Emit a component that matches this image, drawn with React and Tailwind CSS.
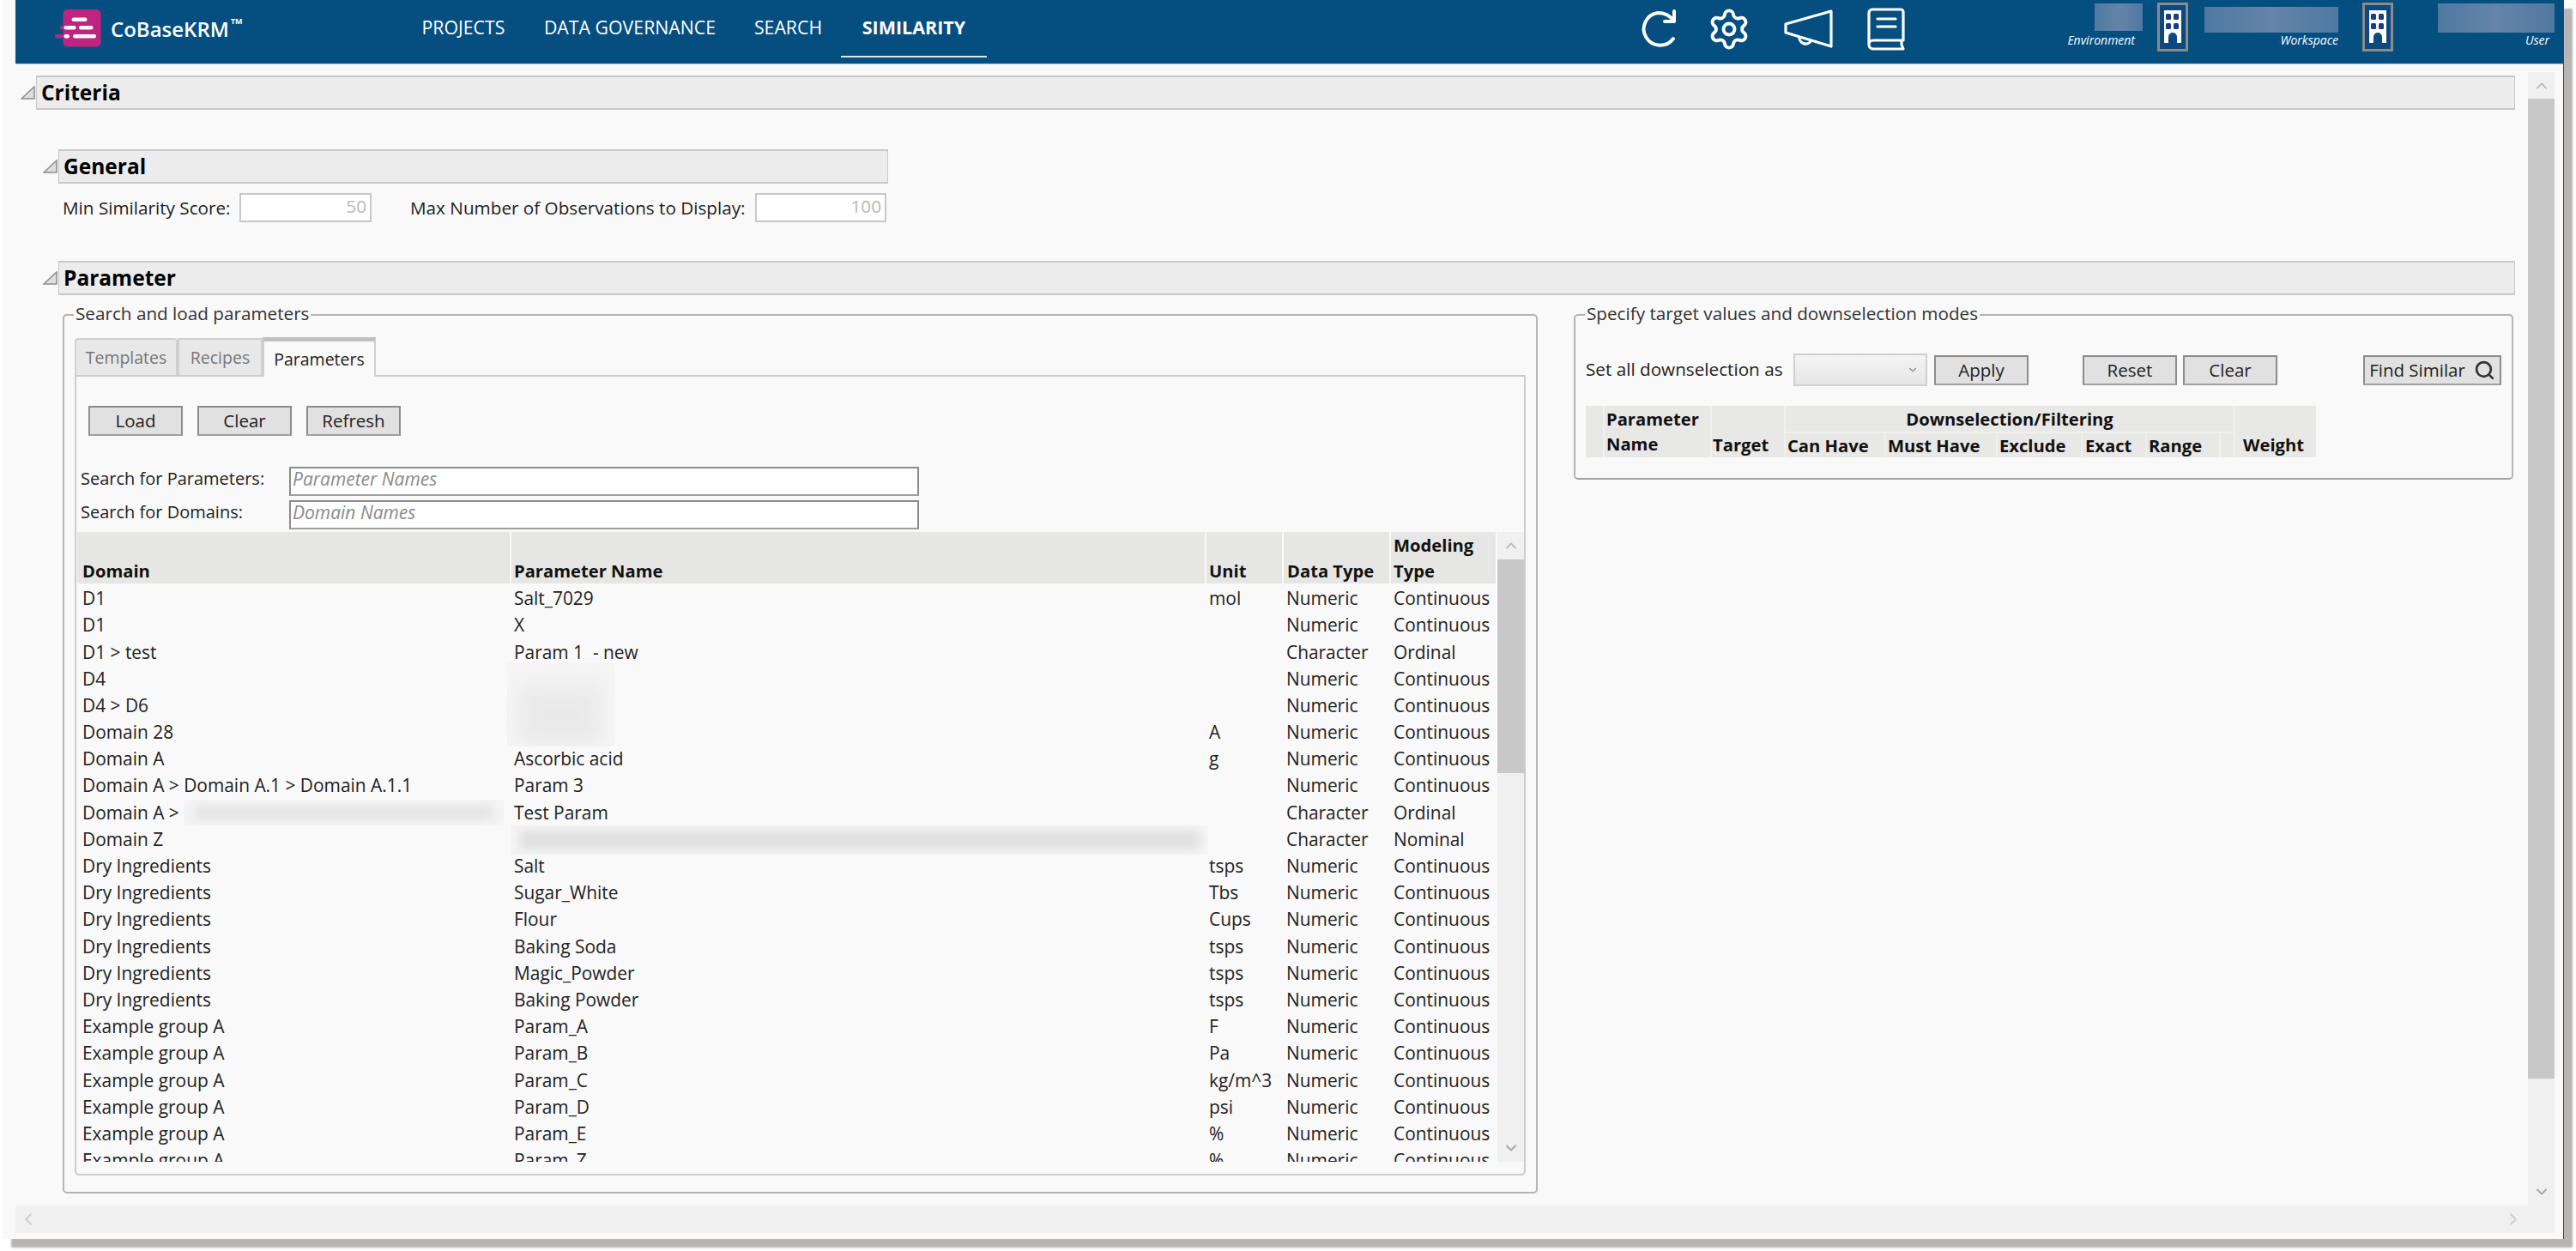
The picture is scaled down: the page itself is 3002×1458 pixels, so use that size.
import React from "react"
import { Settings, ChevronDown, ChevronUp, ChevronLeft, ChevronRight, Search } from "lucide-react"

const rows = [
  ["D1", "Salt_7029", "mol", "Numeric", "Continuous"],
  ["D1", "X", "", "Numeric", "Continuous"],
  ["D1 > test", "Param 1\u00a0 - new", "", "Character", "Ordinal"],
  ["D4", "", "", "Numeric", "Continuous"],
  ["D4 > D6", "", "", "Numeric", "Continuous"],
  ["Domain 28", "", "A", "Numeric", "Continuous"],
  ["Domain A", "Ascorbic acid", "g", "Numeric", "Continuous"],
  ["Domain A > Domain A.1 > Domain A.1.1", "Param 3", "", "Numeric", "Continuous"],
  ["Domain A >", "Test Param", "", "Character", "Ordinal"],
  ["Domain Z", "", "", "Character", "Nominal"],
  ["Dry Ingredients", "Salt", "tsps", "Numeric", "Continuous"],
  ["Dry Ingredients", "Sugar_White", "Tbs", "Numeric", "Continuous"],
  ["Dry Ingredients", "Flour", "Cups", "Numeric", "Continuous"],
  ["Dry Ingredients", "Baking Soda", "tsps", "Numeric", "Continuous"],
  ["Dry Ingredients", "Magic_Powder", "tsps", "Numeric", "Continuous"],
  ["Dry Ingredients", "Baking Powder", "tsps", "Numeric", "Continuous"],
  ["Example group A", "Param_A", "F", "Numeric", "Continuous"],
  ["Example group A", "Param_B", "Pa", "Numeric", "Continuous"],
  ["Example group A", "Param_C", "kg/m^3", "Numeric", "Continuous"],
  ["Example group A", "Param_D", "psi", "Numeric", "Continuous"],
  ["Example group A", "Param_E", "%", "Numeric", "Continuous"],
  ["Example group A", "Param_Z", "%", "Numeric", "Continuous"],
]

const Logo = () => (
  <svg width="54" height="44" viewBox="0 0 54 44" className="shrink-0">
    <rect x="9.5" y="0" width="44" height="43.5" rx="5" fill="#bf2580" />
    <rect x="19.5" y="9.5" width="18" height="4.5" rx="2.2" fill="#fff" />
    <rect x="5.5" y="19" width="6" height="4.5" rx="2" fill="#bf2580" />
    <rect x="10.5" y="19" width="14" height="4.5" rx="2.2" fill="#fff" />
    <rect x="28" y="19" width="16.5" height="4.5" rx="2.2" fill="#fff" />
    <rect x="0" y="29" width="10" height="4.5" rx="2" fill="#bf2580" />
    <rect x="10.5" y="29" width="6.5" height="4.5" rx="2.2" fill="#fff" />
    <rect x="21" y="29" width="27" height="4.5" rx="2.2" fill="#fff" />
  </svg>
)

const RefreshIcon = () => (
  <svg width="42" height="46" viewBox="0 0 42 46" fill="none" stroke="#fff" strokeWidth="4" strokeLinecap="round" strokeLinejoin="round">
    <path d="M38 13 C34 7 27 4 20 4 A19 19 0 1 0 38 34" />
    <path d="M39 2 V14 H28" />
  </svg>
)

const MegaphoneIcon = () => (
  <svg width="58" height="46" viewBox="0 0 58 46" fill="none" stroke="#fff" strokeWidth="3.2" strokeLinejoin="round">
    <path d="M55 2 L2 17 V27 L55 43 Z" />
    <path d="M18 31 a7.5 7.5 0 0 0 14 5" />
  </svg>
)

const BookIcon = () => (
  <svg width="44" height="50" viewBox="0 0 44 50" fill="none" stroke="#fff" strokeWidth="3.2" strokeLinecap="round" strokeLinejoin="round">
    <path d="M42 38 V5 a3 3 0 0 0 -3 -3 H6 a4 4 0 0 0 -4 4 V43 a5 5 0 0 0 5 5 H42 L40 43 V38 H7 a5 5 0 0 0 -5 5" />
    <path d="M12 13 H33 M12 22 H33" />
  </svg>
)

const BuildingIcon = () => (
  <svg width="36" height="57" viewBox="0 0 36 57" className="shrink-0">
    <rect x="1.5" y="1.5" width="33" height="54" fill="#0b4a80" stroke="#8f8a85" strokeWidth="3" />
    <rect x="8" y="9" width="20" height="38" fill="#fff" />
    <rect x="10" y="13" width="6" height="7" rx="1.5" fill="#1c3a85" />
    <rect x="19" y="13" width="6" height="7" rx="1.5" fill="#1c3a85" />
    <rect x="10" y="24" width="6" height="7" rx="1.5" fill="#1c3a85" />
    <rect x="19" y="24" width="6" height="7" rx="1.5" fill="#1c3a85" />
    <path d="M13 47 V40 a5 5 0 0 1 10 0 V47 Z" fill="#0b4a80" />
  </svg>
)

const Triangle = () => (
  <svg width="17" height="16" viewBox="0 0 17 16" className="shrink-0">
    <polygon points="16,1 16,15 1,15" fill="#dedede" stroke="#8c8c8c" strokeWidth="1.5" />
  </svg>
)

const SectionBar = ({ title, className }) => (
  <div className={`flex items-center ${className}`}>
    <div className="w-[18px] shrink-0">
      <Triangle />
    </div>
    <div className="flex-1 h-[40px] flex items-center pl-[5px] bg-[#ececec] border border-[#c8c8c8] border-y-2">
      <span className="text-[24.5px] font-bold text-black leading-none">{title}</span>
    </div>
  </div>
)

const GrayButton = ({ children, className }) => (
  <button className={`h-[35px] flex items-center justify-center bg-[#e1e1e1] border-2 border-[#8c8c8c] border-b-[#a0a0a0] text-[20.5px] text-[#222] ${className}`}>
    {children}
  </button>
)

// grey smear over hidden values
const Redacted = ({ className, inner }) => (
  <div className={`absolute overflow-hidden bg-[#f5f5f5] ${className}`}>
    <div className={inner}></div>
  </div>
)

const TopRedacted = ({ className }) => (
  <div className={`bg-[linear-gradient(90deg,#4f79a2,#6484a8,#4f79a2)] ${className}`}></div>
)

const App = () => {
  return (
    <div className="w-[3002px] h-[1458px] bg-white overflow-hidden font-['Open_Sans',sans-serif] text-[20.7px] text-[#222] leading-none">
      <div className="ml-[3px] w-[2985px] h-[1444px] flex flex-col bg-[#f9f9f9] border-r border-[#444] shadow-[10px_10px_2px_#b8b6b4]">
        {/* Header */}
        <div className="ml-[15px] h-[75px] shrink-0 flex items-start bg-[#044e80] border-b border-[#9cc2de] text-white">
          <div className="w-[451px] pl-[46px] pt-[11px] flex items-start shrink-0">
            <Logo />
            <span className="ml-[11px] mt-[11px] text-[24px] font-semibold">CoBaseKRM</span>
            <span className="ml-[2px] mt-[9px] text-[9px] font-bold">TM</span>
          </div>
          <nav className="flex shrink-0 text-[21.3px]">
            <a className="w-[142px] h-[67px] pb-[3px] flex items-center justify-center">PROJECTS</a>
            <a className="w-[246px] h-[67px] pb-[3px] flex items-center justify-center">DATA GOVERNANCE</a>
            <a className="w-[123px] h-[67px] pb-[3px] flex items-center justify-center">SEARCH</a>
            <a className="w-[170px] h-[67px] pb-[1px] flex items-center justify-center font-bold text-[21.5px] border-b-2 border-[#dfe8ef]">SIMILARITY</a>
          </nav>
          <div className="ml-[762px] mt-[8px] flex items-center shrink-0">
            <RefreshIcon />
            <div className="ml-[35px] w-[50px]">
              <Settings size={52} color="#fff" strokeWidth={1.8} />
            </div>
            <div className="ml-[40px]">
              <MegaphoneIcon />
            </div>
            <div className="ml-[39px]">
              <BookIcon />
            </div>
          </div>
          <div className="ml-[184px] pt-[3px] flex shrink-0 items-start italic text-[14px]">
            <div className="w-[88px] flex flex-col items-end">
              <TopRedacted className="w-[56px] h-[32px] mt-[1px] mr-[-5px]" />
              <span className="mt-[4px] mr-[4px]">Environment</span>
            </div>
            <div className="ml-[22px]">
              <BuildingIcon />
            </div>
            <div className="ml-[19px] w-[156px] flex flex-col items-end">
              <TopRedacted className="w-[156px] h-[30px] mt-[5px]" />
              <span className="mt-[2px]">Workspace</span>
            </div>
            <div className="ml-[28px]">
              <BuildingIcon />
            </div>
            <div className="ml-[52px] w-[136px] flex flex-col items-end">
              <TopRedacted className="w-[136px] h-[34px] mt-[1px]" />
              <span className="mt-[2px] mr-[6px]">User</span>
            </div>
          </div>
        </div>

        {/* Main */}
        <div className="h-[1330px] shrink-0 flex overflow-hidden">
          <div className="w-[2943px] pl-[21px] pt-[13px] shrink-0">
            <SectionBar title="Criteria" className="w-[2907px]" />

            <div className="ml-[26px] mt-[46px]">
              <SectionBar title="General" className="w-[985px]" />
              <div className="mt-[11px] h-[34px] pl-[23px] flex items-center">
                <span className="w-[206px]">Min Similarity Score:</span>
                <input readOnly value="50" className="w-[154px] h-[34px] pr-[4px] pb-[4px] text-right text-[#b9b9b9] bg-white border-2 border-[#c8c8c8] outline-none" />
                <span className="ml-[45px] w-[402px]">Max Number of Observations to Display:</span>
                <input readOnly value="100" className="w-[153px] h-[34px] pr-[4px] pb-[4px] text-right text-[#b9b9b9] bg-white border-2 border-[#c8c8c8] outline-none" />
              </div>

              <SectionBar title="Parameter" className="mt-[45px] w-[2881px]" />
            </div>

            <div className="ml-[49px] mt-[8px] flex items-start">
              {/* Search and load */}
              <fieldset className="w-[1719px] h-[1039px] shrink-0 border-2 border-[#b4b4b4] rounded-[5px] px-[12px]">
                <legend className="ml-[-1px] px-[2px] h-[30px] leading-[26px] text-[#333]">Search and load parameters</legend>

                <div className="mt-[12px] flex items-end h-[43px] text-[19.5px]">
                  <div className="w-[120px] h-[43px] flex items-center justify-center bg-[#e8e8e8] border-2 border-b-0 border-[#d0d0d0] rounded-t-[4px] text-[#777]">Templates</div>
                  <div className="w-[99px] h-[43px] flex items-center justify-center bg-[#e8e8e8] border-2 border-b-0 border-[#d0d0d0] text-[#777]">Recipes</div>
                  <div className="w-[132px] h-[46px] flex items-center justify-center bg-[#f9f9f9] border-t-[5px] border-x-2 border-[#c0c0c0] border-x-[#d0d0d0] text-[#222] relative top-[2px]">Parameters</div>
                </div>

                <div className="w-[1691px] h-[933px] border-2 border-[#cccccc] rounded-b-[5px] pl-px">
                  <div className="mt-[34px] ml-[13px] flex gap-[17px]">
                    <GrayButton className="w-[110px]">Load</GrayButton>
                    <GrayButton className="w-[110px]">Clear</GrayButton>
                    <GrayButton className="w-[110px]">Refresh</GrayButton>
                  </div>

                  <div className="mt-[36px] ml-[4px] flex items-center h-[34px] text-[20px]">
                    <span className="w-[243px] pb-[7px]">Search for Parameters:</span>
                    <input placeholder="Parameter Names" className="w-[734px] h-[34px] pl-[2px] pb-[7px] text-[21px] bg-white border-2 border-[#8c8c8c] border-b-[#a0a0a0] outline-none placeholder:italic placeholder:text-[#8a8a8a]" />
                  </div>
                  <div className="mt-[5px] ml-[4px] flex items-center h-[34px] text-[20px]">
                    <span className="w-[243px] pb-[7px]">Search for Domains:</span>
                    <input placeholder="Domain Names" className="w-[734px] h-[34px] pl-[2px] pb-[7px] text-[21px] bg-white border-2 border-[#8c8c8c] border-b-[#a0a0a0] outline-none placeholder:italic placeholder:text-[#8a8a8a]" />
                  </div>

                  <div className="mt-[3px] flex h-[734px] overflow-hidden">
                    <div className="w-[1653px] shrink-0">
                      {/* table head */}
                      <div className="grid grid-cols-[504px_810px_90px_125px_124px] h-[59px] font-bold text-[20.2px] text-[#111] leading-[30px]">
                        <div className="bg-[#e6e6e4] pl-[6px] flex items-end">Domain</div>
                        <div className="bg-[#e6e6e4] ml-[2px] pl-[3px] flex items-end">Parameter Name</div>
                        <div className="bg-[#e6e6e4] ml-[2px] pl-[3px] flex items-end">Unit</div>
                        <div className="bg-[#e6e6e4] ml-[2px] pl-[4px] flex items-end">Data Type</div>
                        <div className="bg-[#e6e6e4] ml-[2px] pl-[3px] flex items-end">Modeling<br />Type</div>
                      </div>
                      {/* table body */}
                      <div className="relative pt-[3px] text-[20.9px]">
                        {rows.map((r, i) => (
                          <div key={i} className="grid grid-cols-[504px_810px_90px_125px_124px] h-[31.2px] items-center whitespace-nowrap">
                            <div className="pl-[6px]">{r[0]}</div>
                            <div className="pl-[5px]">{r[1]}</div>
                            <div className="pl-[5px]">{r[2]}</div>
                            <div className="pl-[5px]">{r[3]}</div>
                            <div className="pl-[5px]">{r[4]}</div>
                          </div>
                        ))}
                        <Redacted className="left-[501px] top-[93px] w-[125px] h-[98px]" inner="ml-[15px] mt-[28px] w-[95px] h-[66px] bg-[#e9e9e9] blur-[12px]" />
                        <Redacted className="left-[124px] top-[253px] w-[373px] h-[30px]" inner="mx-[12px] mt-[6px] h-[18px] bg-[#e4e4e4] blur-[6px]" />
                        <Redacted className="left-[505px] top-[283px] w-[813px] h-[34px]" inner="mx-[10px] mt-[6px] h-[22px] bg-[#dfdfdf] blur-[6px]" />
                      </div>
                    </div>
                    {/* table scrollbar */}
                    <div className="ml-[2px] w-[32px] shrink-0 bg-[#f0f0f0] flex flex-col items-center">
                      <div className="h-[32px] flex items-center">
                        <ChevronUp size={20} color="#bdbdbd" strokeWidth={2.4} />
                      </div>
                      <div className="w-full h-[249px] bg-[#c8c8c8]"></div>
                      <div className="mt-auto h-[32px] flex items-center">
                        <ChevronDown size={20} color="#a8a8a8" strokeWidth={2.4} />
                      </div>
                    </div>
                  </div>
                </div>
              </fieldset>

              {/* Target values */}
              <fieldset className="ml-[42px] w-[1095px] h-[207px] shrink-0 border-2 border-[#b4b4b4] border-b-[#a0a0a0] rounded-[5px] px-[12px]">
                <legend className="ml-[-1px] px-[2px] h-[30px] leading-[26px] text-[#333]">Specify target values and downselection modes</legend>

                <div className="mt-[30px] flex items-center h-[38px]">
                  <span className="w-[242px] pb-[2px]">Set all downselection as</span>
                  <div className="w-[156px] h-[38px] pr-[8px] flex items-center justify-end bg-[linear-gradient(#f4f4f4,#e6e6e6)] border-2 border-[#cfcfcf]">
                    <ChevronDown size={14} color="#8c8c8c" />
                  </div>
                  <GrayButton className="ml-[8px] w-[110px]">Apply</GrayButton>
                  <GrayButton className="ml-[63px] w-[110px]">Reset</GrayButton>
                  <GrayButton className="ml-[7px] w-[110px]">Clear</GrayButton>
                  <GrayButton className="ml-[100px] w-[161px] gap-[10px]">
                    Find Similar <Search size={25} color="#333" strokeWidth={2.6} />
                  </GrayButton>
                </div>

                <div className="mt-[23px] w-[851px] grid grid-cols-[20px_125px_86px_117px_130px_99px_75px_86px_17px_96px] grid-rows-[32px_28px] bg-[#e8e8e6] font-bold text-[20.2px] text-[#111] leading-[29px] whitespace-nowrap">
                  <div className="row-span-2"></div>
                  <div className="row-span-2 pl-[2px] border-l-2 border-[#f0f0f0] flex flex-col justify-center">
                    <span>Parameter</span>
                    <span>Name</span>
                  </div>
                  <div className="row-span-2 flex items-end pl-[1px] border-l-2 border-[#f0f0f0]">Target</div>
                  <div className="col-span-6 flex items-center justify-center border-l-2 border-b-2 border-[#f0f0f0]">Downselection/Filtering</div>
                  <div className="row-span-2 flex items-end pl-[9px] border-l-2 border-[#f0f0f0]">Weight</div>
                  <div className="flex items-center pl-[2px] border-l-2 border-[#f0f0f0]">Can Have</div>
                  <div className="flex items-center pl-[2px] border-l-2 border-[#f0f0f0]">Must Have</div>
                  <div className="flex items-center pl-[2px] border-l-2 border-[#f0f0f0]">Exclude</div>
                  <div className="flex items-center pl-[3px] border-l-2 border-[#f0f0f0]">Exact</div>
                  <div className="flex items-center pl-[2px] border-l-2 border-[#f0f0f0]">Range</div>
                  <div className="border-l-2 border-[#f0f0f0]"></div>
                </div>
              </fieldset>
            </div>
          </div>

          {/* page scrollbar */}
          <div className="mt-[9px] w-[31px] shrink-0 bg-[#f0f0f0] flex flex-col items-center">
            <div className="h-[31px] flex items-center">
              <ChevronUp size={20} color="#bdbdbd" strokeWidth={2.4} />
            </div>
            <div className="w-full h-[1142px] bg-[#c8c8c8]"></div>
            <div className="mt-auto h-[32px] flex items-center">
              <ChevronDown size={20} color="#a8a8a8" strokeWidth={2.4} />
            </div>
          </div>
        </div>

        {/* bottom scrollbar */}
        <div className="ml-[15px] mr-[10px] h-[32px] shrink-0 flex items-center justify-between pl-[4px] pr-[37px] bg-[#f0f0f0]">
          <ChevronLeft size={22} color="#cfcfcf" strokeWidth={2.4} />
          <ChevronRight size={22} color="#cfcfcf" strokeWidth={2.4} />
        </div>
      </div>
    </div>
  )
}

export default App
